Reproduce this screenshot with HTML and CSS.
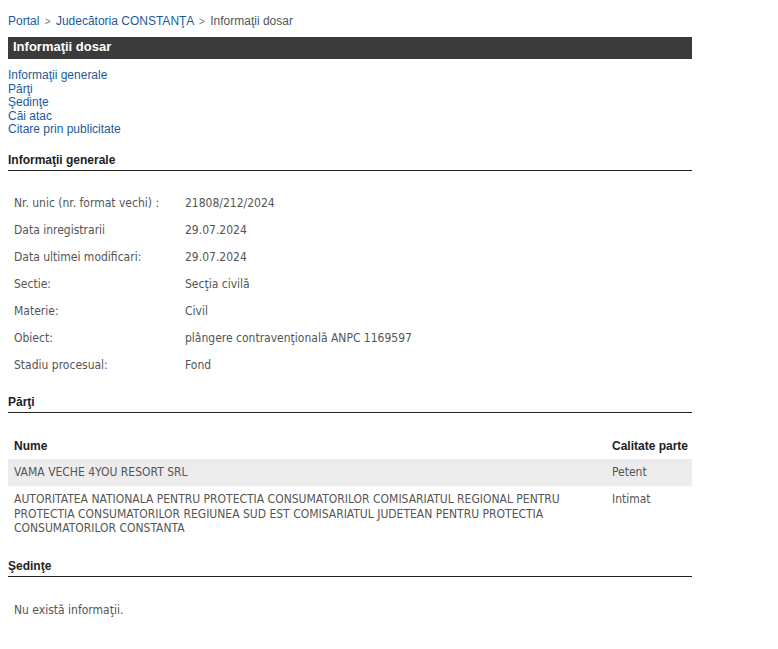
FILE: index.html
```html
<!DOCTYPE html>
<html lang="ro">
<head>
    <meta charset="UTF-8">
    <title>Informaţii dosar</title>
    <link rel="stylesheet" href="styles.css">
</head>
<body>
    <div class="page">
        <div class="breadcrumb">
            <a href="#">Portal</a> <span class="sep">&gt;</span> <a href="#">Judecătoria CONSTANŢA</a> <span class="sep">&gt;</span> Informaţii dosar
        </div>

        <h2 class="title-bar">Informaţii dosar</h2>

        <ul class="toc">
            <li><a href="#generale">Informaţii generale</a></li>
            <li><a href="#parti">Părţi</a></li>
            <li><a href="#sedinte">Şedinţe</a></li>
            <li><a href="#cai">Căi atac</a></li>
            <li><a href="#citare">Citare prin publicitate</a></li>
        </ul>

        <h3 class="section" id="generale">Informaţii generale</h3>
        <table class="info">
            <tr><td class="lbl">Nr. unic (nr. format vechi) :</td><td>21808/212/2024</td></tr>
            <tr><td class="lbl">Data inregistrarii</td><td>29.07.2024</td></tr>
            <tr><td class="lbl">Data ultimei modificari:</td><td>29.07.2024</td></tr>
            <tr><td class="lbl">Sectie:</td><td>Secţia civilă</td></tr>
            <tr><td class="lbl">Materie:</td><td>Civil</td></tr>
            <tr><td class="lbl">Obiect:</td><td>plângere contravenţională ANPC 1169597</td></tr>
            <tr><td class="lbl">Stadiu procesual:</td><td>Fond</td></tr>
        </table>

        <h3 class="section" id="parti">Părţi</h3>
        <table class="parti">
            <thead>
                <tr><th>Nume</th><th class="calitate">Calitate parte</th></tr>
            </thead>
            <tbody>
                <tr class="odd"><td>VAMA VECHE 4YOU RESORT SRL</td><td>Petent</td></tr>
                <tr><td>AUTORITATEA NATIONALA PENTRU PROTECTIA CONSUMATORILOR COMISARIATUL REGIONAL PENTRU PROTECTIA CONSUMATORILOR REGIUNEA SUD EST COMISARIATUL JUDETEAN PENTRU PROTECTIA CONSUMATORILOR CONSTANTA</td><td>Intimat</td></tr>
            </tbody>
        </table>

        <h3 class="section" id="sedinte">Şedinţe</h3>
        <p class="empty">Nu există informaţii.</p>
    </div>
</body>
</html>
```

FILE: styles.css
```css
body {
    margin: 8px;
    font-family: "Liberation Sans", Arial, sans-serif;
    font-size: 12px;
    color: #333;
}
.page {
    width: 684px;
}
a {
    color: #1c5a9e;
    text-decoration: none;
}
.breadcrumb {
    margin-top: 6px;
    height: 15px;
    color: #555;
}
.breadcrumb .sep {
    font-size: 10px;
    color: #777;
    margin: 0 2px;
}
.title-bar {
    margin: 8px 0 0;
    height: 22px;
    line-height: 19px;
    padding-left: 5px;
    background-color: #3b3b3b;
    color: #fff;
    font-size: 13px;
    font-weight: bold;
}
.toc {
    list-style: none;
    margin: 10px 0 0;
    padding: 0;
}
.toc li {
    line-height: 13.5px;
}
.section {
    margin: 16px 0 0;
    padding-bottom: 3px;
    border-bottom: 1px solid #222;
    font-size: 12px;
    font-weight: bold;
    color: #222;
}
.info, .parti {
    border-collapse: collapse;
    font-family: "DejaVu Sans Condensed", "DejaVu Sans", sans-serif;
    font-size: 12px;
    color: #555;
}
.info {
    margin-top: 19px;
}
.info td {
    height: 27px;
    padding: 0 6px;
}
.info td.lbl {
    width: 159px;
}
.parti {
    width: 684px;
    margin-top: 21px;
}
.parti th {
    text-align: left;
    font-family: "Liberation Sans", Arial, sans-serif;
    font-size: 12px;
    color: #222;
    height: 25px;
    padding: 0 6px;
    vertical-align: middle;
    white-space: nowrap;
}
.parti td {
    padding: 6px 6px 7px;
    line-height: 14.5px;
    vertical-align: top;
}
.parti .calitate {
    width: 76px;
    padding-right: 4px;
}
.parti tr.odd td {
    background-color: #ececec;
}
.empty {
    margin: 26px 0 0 6px;
    font-family: "DejaVu Sans Condensed", "DejaVu Sans", sans-serif;
    font-size: 12px;
    color: #555;
}
```
